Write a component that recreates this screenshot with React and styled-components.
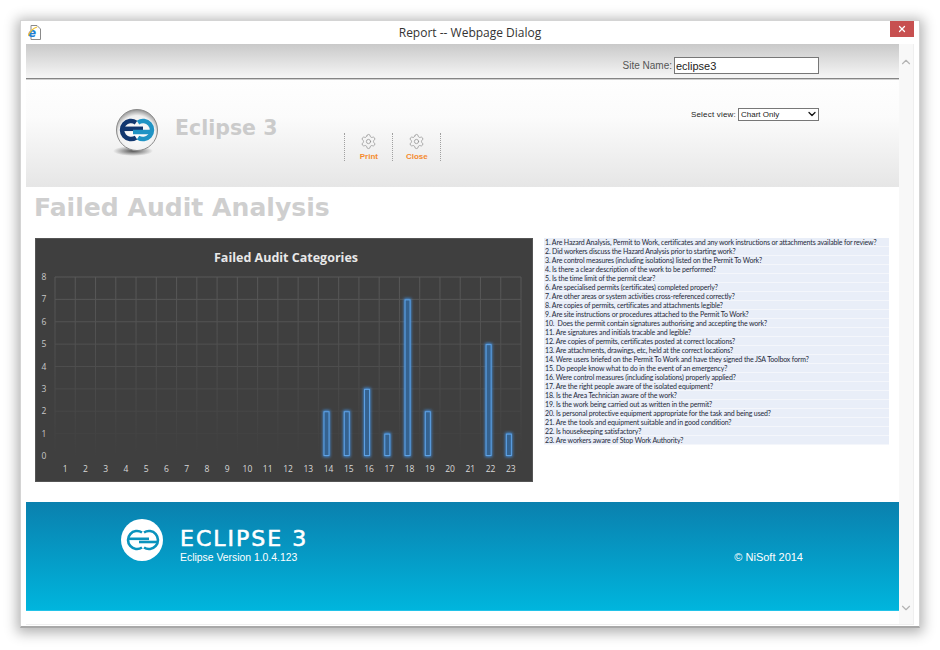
import React from "react";
import styled, { createGlobalStyle } from "styled-components";
import { Settings, ChevronDown, ChevronUp, X } from "lucide-react";

const GlobalStyle = createGlobalStyle`
  html, body { margin: 0; padding: 0; background: #fff; overflow: hidden; }
  body { font-family: "Liberation Sans", Arial, sans-serif; }
`;

const Page = styled.div`
  width: 940px;
  height: 650px;
  padding: 20px;
  box-sizing: border-box;
`;

const Window = styled.div`
  width: 900px;
  height: 608px;
  box-sizing: border-box;
  background: #fff;
  border: 1px solid #d4d4d4;
  border-bottom: 2px solid #a8a8a8;
  box-shadow: 0 2px 12px 3px rgba(0, 0, 0, 0.3);
  display: flex;
  flex-direction: column;
`;

const TitleBar = styled.div`
  height: 23px;
  flex: none;
  display: flex;
  align-items: center;
  justify-content: center;
  position: relative;
  font-family: "Open Sans", sans-serif;
  font-size: 12px;
  color: #333;
`;

const AppIcon = styled.svg`
  position: absolute;
  left: 7px;
  top: 4px;
`;

const CloseButton = styled.div`
  position: absolute;
  right: 5px;
  top: 0;
  width: 24px;
  height: 16px;
  background: #c75050;
  display: flex;
  align-items: center;
  justify-content: center;
  color: #fff;
`;

const Frame = styled.div`
  flex: 1;
  min-height: 0;
  margin: 0 5px 1px;
  display: flex;
  border: 1px solid #efefef;
  border-top: none;
  border-left: none;
`;

const Content = styled.div`
  width: 873px;
  flex: none;
  display: flex;
  flex-direction: column;
`;

const Scrollbar = styled.div`
  flex: 1;
  background: #f8f8f8;
  display: flex;
  flex-direction: column;
  justify-content: space-between;
  align-items: center;
  padding: 11px 0 9px;
  color: #b4b4b4;
`;

const Toolbar = styled.div`
  height: 35px;
  flex: none;
  box-sizing: border-box;
  background: linear-gradient(#c9c9c9, #f6f6f6);
  border-bottom: 1px solid #858585;
  display: flex;
  align-items: center;
  justify-content: flex-end;
  gap: 2px;
  padding: 9px 80px 0 0;
`;

const SiteLabel = styled.span`
  font-size: 10px;
  color: #555;
`;

const SiteInput = styled.input`
  width: 145px;
  height: 17px;
  box-sizing: border-box;
  border: 1px solid #777;
  background: #fff;
  padding: 0 1px;
  font-family: "Liberation Sans", sans-serif;
  font-size: 11px;
  color: #222;
`;

const Header = styled.div`
  height: 108px;
  flex: none;
  background: linear-gradient(#fefefe 0%, #fbfbfb 35%, #e6e6e6 100%);
  border-top: 1px solid #cfcfcf;
  box-sizing: border-box;
  display: flex;
  align-items: flex-start;
  padding-left: 85px;
`;

const Brand = styled.div`
  display: flex;
  align-items: flex-start;
  gap: 14px;
  margin-top: 28px;
`;

const BrandName = styled.div`
  margin-top: 8px;
  font-family: "DejaVu Sans", sans-serif;
  font-weight: bold;
  font-size: 20.5px;
  color: #cbcbcb;
`;

const Actions = styled.div`
  display: flex;
  margin: 53px 0 0 67px;
  border-left: 1px dotted #a0a0a0;
`;

const Action = styled.div`
  width: 47px;
  height: 28px;
  border-right: 1px dotted #a0a0a0;
  display: flex;
  flex-direction: column;
  align-items: center;
  color: #8c8c8c;
`;

const ActionLabel = styled.span`
  font-size: 8px;
  font-weight: bold;
  color: #f58b2e;
  margin-top: 2px;
`;

const ViewPicker = styled.div`
  margin: 28px 80px 0 auto;
  display: flex;
  align-items: center;
  gap: 2px;
`;

const ViewLabel = styled.span`
  font-size: 8px;
  color: #222;
  letter-spacing: 0.2px;
`;

const SelectWrap = styled.div`
  position: relative;
  width: 81px;
  height: 13px;
  display: flex;
`;

const Select = styled.select`
  appearance: none;
  width: 100%;
  height: 100%;
  box-sizing: border-box;
  border: 1px solid #777;
  border-radius: 0;
  background: #fff;
  padding: 0 2px;
  font-family: "Liberation Sans", sans-serif;
  font-size: 8px;
  color: #222;
`;

const SelectArrow = styled.span`
  position: absolute;
  right: 1px;
  top: 0;
  display: flex;
  color: #111;
  pointer-events: none;
`;

const Main = styled.div`
  height: 315px;
  flex: none;
  box-sizing: border-box;
  padding-left: 9px;
`;

const PageTitle = styled.h1`
  margin: 0 0 0 -1px;
  height: 51px;
  font-family: "DejaVu Sans", Verdana, sans-serif;
  font-weight: bold;
  font-size: 25.1px;
  line-height: 42px;
  color: #cfcfcf;
`;

const Panels = styled.div`
  display: flex;
  align-items: flex-start;
  gap: 11px;
`;

const ChartBox = styled.svg`
  display: block;
  flex: none;
`;

const Questions = styled.ol`
  list-style: none;
  margin: 0;
  padding: 0;
  width: 345px;
`;

const Question = styled.li`
  height: 9px;
  line-height: 9px;
  padding-left: 1px;
  font-family: Lato, sans-serif;
  font-size: 7px;
  letter-spacing: -0.15px;
  white-space: pre;
  color: #1f2a3a;
  background: #e9eef8;
  border-bottom: 1px solid #f4f6fb;
  box-sizing: border-box;
`;

const Footer = styled.div`
  height: 109px;
  flex: none;
  box-sizing: border-box;
  background: linear-gradient(#0a80ae, #00b5dd);
  border-bottom: 1px solid #22c3e8;
  display: flex;
  align-items: flex-start;
  padding-left: 95px;
  color: #fff;
`;

const FooterBrand = styled.div`
  display: flex;
  gap: 17px;
  margin-top: 17px;
`;

const FooterName = styled.div`
  font-family: "DejaVu Sans", sans-serif;
  font-size: 22px;
  line-height: 22px;
  margin-top: 9px;
  letter-spacing: 2px;
  -webkit-text-stroke: 0.6px #fff;
`;

const FooterVersion = styled.div`
  font-size: 10.4px;
  line-height: 12px;
  margin-top: 2px;
`;

const Copyright = styled.div`
  margin: 49px 96px 0 auto;
  font-size: 11px;
`;

const questions = [
  "1. Are Hazard Analysis, Permit to Work, certificates and any work instructions or attachments available for review?",
  "2. Did workers discuss the Hazard Analysis prior to starting work?",
  "3. Are control measures (including isolations) listed on the Permit To Work?",
  "4. Is there a clear description of the work to be performed?",
  "5. Is the time limit of the permit clear?",
  "6. Are specialised permits (certificates) completed properly?",
  "7. Are other areas or system activities cross-referenced correctly?",
  "8. Are copies of permits, certificates and attachments legible?",
  "9. Are site instructions or procedures attached to the Permit To Work?",
  "10.  Does the permit contain signatures authorising and accepting the work?",
  "11. Are signatures and initials tracable and legible?",
  "12. Are copies of permits, certificates posted at correct locations?",
  "13. Are attachments, drawings, etc, held at the correct locations?",
  "14. Were users briefed on the Permit To Work and have they signed the JSA Toolbox form?",
  "15. Do people know what to do in the event of an emergency?",
  "16. Were control measures (including isolations) properly applied?",
  "17. Are the right people aware of the isolated equipment?",
  "18. Is the Area Technician aware of the work?",
  "19. Is the work being carried out as written in the permit?",
  "20. Is personal protective equipment appropriate for the task and being used?",
  "21. Are the tools and equipment suitable and in good condition?",
  "22. Is housekeeping satisfactory?",
  "23. Are workers aware of Stop Work Authority?",
];

const values = [0, 0, 0, 0, 0, 0, 0, 0, 0, 0, 0, 0, 0, 2, 2, 3, 1, 7, 2, 0, 0, 5, 1];

const PLOT = { left: 20, right: 486, top: 39, bottom: 218 };
const colW = (PLOT.right - PLOT.left) / 23;
const rowH = (PLOT.bottom - PLOT.top) / 8;

const Chart = () => (
  <ChartBox width="498" height="244" viewBox="0 0 498 244">
    <defs>
      <linearGradient id="gridFade" gradientUnits="userSpaceOnUse" x1="0" y1={PLOT.top} x2="0" y2={PLOT.bottom}>
        <stop offset="0" stopColor="#585858" />
        <stop offset="0.55" stopColor="#4c4c4c" />
        <stop offset="1" stopColor="#3f3f3f" />
      </linearGradient>
      <filter id="barGlow" x="-200%" y="-10%" width="500%" height="120%">
        <feGaussianBlur stdDeviation="1.8" />
      </filter>
    </defs>
    <rect width="498" height="244" fill="#3f3f3f" />
    <rect x="0.5" y="0.5" width="497" height="243" fill="none" stroke="#555" />
    <text x="251" y="24" textAnchor="middle" fontFamily="Open Sans" fontWeight="700" fontSize="12.5" fill="#e8e8e8">
      Failed Audit Categories
    </text>
    {Array.from({ length: 24 }, (_, i) => (
      <rect key={`v${i}`} x={PLOT.left + i * colW - 0.5} y={PLOT.top} width="1" height={PLOT.bottom - PLOT.top} fill="url(#gridFade)" />
    ))}
    {Array.from({ length: 8 }, (_, i) => (
      <rect key={`h${i}`} x={PLOT.left} y={PLOT.top + i * rowH - 0.5} width={PLOT.right - PLOT.left} height="1" fill="url(#gridFade)" />
    ))}
    {Array.from({ length: 9 }, (_, i) => (
      <text key={`y${i}`} x="9" y={PLOT.bottom - i * rowH + 3} textAnchor="middle" fontFamily="Open Sans" fontSize="8.5" fill="#c8c8c8">
        {i}
      </text>
    ))}
    {values.map((v, i) => (
      <text key={`x${i}`} x={PLOT.left + (i + 0.5) * colW} y="234" textAnchor="middle" fontFamily="Open Sans" fontSize="8.5" fill="#d8d8d8">
        {i + 1}
      </text>
    ))}
    {values.map((v, i) =>
      v > 0 ? (
        <g key={`b${i}`}>
          <rect x={PLOT.left + (i + 0.5) * colW - 5.5} y={PLOT.bottom - v * rowH - 1} width="7" height={v * rowH + 2} fill="#3f8fe0" filter="url(#barGlow)" />
          <rect x={PLOT.left + (i + 0.5) * colW - 4.5} y={PLOT.bottom - v * rowH + 0.5} width="5" height={v * rowH - 1} fill="#35628f" stroke="#5fa3e6" />
        </g>
      ) : null
    )}
  </ChartBox>
);

// two interlocked arcs, an "e" and its mirror, joined by offset crossbars
const LogoMark = ({ color, accent, stroke }) => (
  <g fill="none" strokeWidth={stroke}>
    <path d="M-1 -7.5 A9 9 0 1 0 -1 7.5" stroke={color} />
    <path d="M-14 -1.2 H6" stroke={color} />
    <path d="M1 -7.5 A9 9 0 1 1 1 7.5" stroke={accent} />
    <path d="M-4 2 H14" stroke={accent} />
  </g>
);

const SphereLogo = () => (
  <svg width="50" height="50" viewBox="-25 -25 50 50">
    <defs>
      <radialGradient id="sphere" cx="0.5" cy="0.6" r="0.6">
        <stop offset="0" stopColor="#ffffff" />
        <stop offset="0.75" stopColor="#f0f0f0" />
        <stop offset="1" stopColor="#8f8f8f" />
      </radialGradient>
      <radialGradient id="shadow">
        <stop offset="0" stopColor="#555" />
        <stop offset="1" stopColor="#555" stopOpacity="0" />
      </radialGradient>
    </defs>
    <ellipse cx="-3" cy="18" rx="20" ry="5" fill="url(#shadow)" />
    <circle cx="1" cy="-3" r="20.5" fill="url(#sphere)" stroke="#8a8a8a" />
    <g transform="translate(1 -3)">
      <LogoMark color="#12376f" accent="#1f93c4" stroke={4.5} />
    </g>
  </svg>
);

const FooterLogo = () => (
  <svg width="42" height="42" viewBox="-21 -21 42 42">
    <circle r="21" fill="#fff" />
    <g transform="translate(1 0)">
      <LogoMark color="#0a93bd" accent="#0a93bd" stroke={2.6} />
    </g>
  </svg>
);

const IeIcon = () => (
  <AppIcon width="13" height="15" viewBox="0 0 13 15">
    <path d="M3 .5H9L12.5 4V14.5H3Z" fill="#fff" stroke="#8a8a8a" />
    <text x="0" y="11.5" fontFamily="DejaVu Sans" fontWeight="bold" fontStyle="italic" fontSize="12" fill="#1c7fd6">
      e
    </text>
    <path d="M0 11C2 6 6 3 9 2" fill="none" stroke="#f2c230" strokeWidth="1.2" />
  </AppIcon>
);

export default function App() {
  return (
    <Page>
      <GlobalStyle />
      <Window>
        <TitleBar>
          <IeIcon />
          Report -- Webpage Dialog
          <CloseButton>
            <X size={10} strokeWidth={3} />
          </CloseButton>
        </TitleBar>
        <Frame>
          <Content>
            <Toolbar>
              <SiteLabel>Site Name:</SiteLabel>
              <SiteInput defaultValue="eclipse3" readOnly />
            </Toolbar>
            <Header>
              <Brand>
                <SphereLogo />
                <BrandName>Eclipse 3</BrandName>
              </Brand>
              <Actions>
                <Action>
                  <Settings size={19} strokeWidth={1} />
                  <ActionLabel>Print</ActionLabel>
                </Action>
                <Action>
                  <Settings size={19} strokeWidth={1} />
                  <ActionLabel>Close</ActionLabel>
                </Action>
              </Actions>
              <ViewPicker>
                <ViewLabel>Select view:</ViewLabel>
                <SelectWrap>
                  <Select defaultValue="Chart Only">
                    <option>Chart Only</option>
                  </Select>
                  <SelectArrow>
                    <ChevronDown size={12} strokeWidth={2.5} />
                  </SelectArrow>
                </SelectWrap>
              </ViewPicker>
            </Header>
            <Main>
              <PageTitle>Failed Audit Analysis</PageTitle>
              <Panels>
                <Chart />
                <Questions>
                  {questions.map((q) => (
                    <Question key={q}>{q}</Question>
                  ))}
                </Questions>
              </Panels>
            </Main>
            <Footer>
              <FooterBrand>
                <FooterLogo />
                <div>
                  <FooterName>ECLIPSE 3</FooterName>
                  <FooterVersion>Eclipse Version 1.0.4.123</FooterVersion>
                </div>
              </FooterBrand>
              <Copyright>© NiSoft 2014</Copyright>
            </Footer>
          </Content>
          <Scrollbar>
            <ChevronUp size={14} strokeWidth={2} />
            <ChevronDown size={14} strokeWidth={2} />
          </Scrollbar>
        </Frame>
      </Window>
    </Page>
  );
}
